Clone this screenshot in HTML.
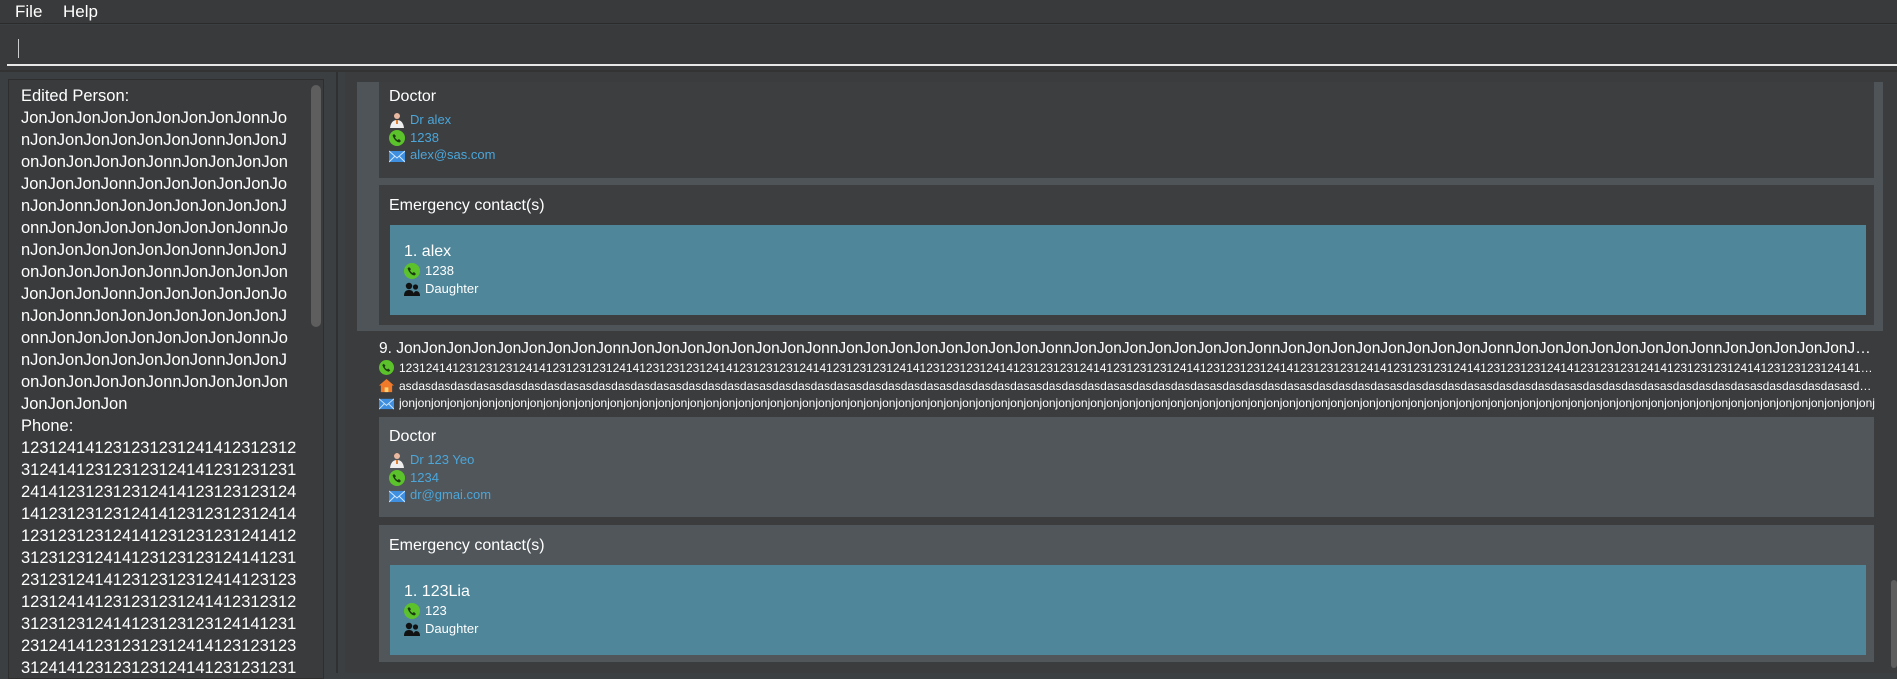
<!DOCTYPE html>
<html><head><meta charset="utf-8"><style>
*{margin:0;padding:0;box-sizing:border-box}
body{width:1897px;height:673px;overflow:hidden;background:#3c3f41;font-family:"Liberation Sans",sans-serif;color:#fff;position:relative}
.a{position:absolute}
.menu{left:0;top:0;width:1897px;height:24px;background:#393a3b;border-bottom:1px solid #2b2b2b}
.menu span{position:absolute;top:2px;font-size:17px;color:#fff}
.cmd{left:0;top:25px;width:1897px;height:47px;background:#393a3b}
.lt{left:21px;font-size:16.5px;line-height:22px;white-space:pre;color:#fff}
.sm{font-size:13px;white-space:nowrap}
.lnk{color:#4ba6da}
.ic{position:absolute;width:16px;height:16px}
.ell{white-space:nowrap;overflow:hidden;text-overflow:ellipsis}
</style></head><body>
<div class="a menu"><span style="left:15px">File</span><span style="left:63px">Help</span></div>
<div class="a cmd"></div>
<div class="a" style="left:18px;top:39px;width:1px;height:19px;background:#ccc"></div>
<div class="a" style="left:7px;top:64px;width:1890px;height:2px;background:#e8e8e8"></div>
<div class="a" style="left:0;top:70px;width:1897px;height:2px;background:#333"></div>

<!-- left panel -->
<div class="a" style="left:0;top:72px;width:336px;height:601px;background:#3c3f41"></div>
<div class="a" style="left:8px;top:79px;width:316px;height:600px;background:#3a3b3c;border:1px solid #2e2e2e"></div>
<div class="a" style="left:311px;top:85px;width:10px;height:242px;background:#5e5e5e;border-radius:5px"></div>
<div class="a lt" style="top:85px">Edited Person:
JonJonJonJonJonJonJonJonJonnJo
nJonJonJonJonJonJonJonnJonJonJ
onJonJonJonJonJonnJonJonJonJon
JonJonJonJonnJonJonJonJonJonJo
nJonJonnJonJonJonJonJonJonJonJ
onnJonJonJonJonJonJonJonJonnJo
nJonJonJonJonJonJonJonnJonJonJ
onJonJonJonJonJonnJonJonJonJon
JonJonJonJonnJonJonJonJonJonJo
nJonJonnJonJonJonJonJonJonJonJ
onnJonJonJonJonJonJonJonJonnJo
nJonJonJonJonJonJonJonnJonJonJ
onJonJonJonJonJonnJonJonJonJon
JonJonJonJon
Phone:
123124141231231231241412312312
312414123123123124141231231231
241412312312312414123123123124
141231231231241412312312312414
123123123124141231231231241412
312312312414123123123124141231
231231241412312312312414123123
123124141231231231241412312312
312312312414123123123124141231
231241412312312312414123123123
312414123123123124141231231231</div>

<!-- divider -->
<div class="a" style="left:336px;top:72px;width:2px;height:601px;background:#2f3031"></div>
<div class="a" style="left:338px;top:72px;width:7px;height:601px;background:#3c3f41"></div>
<div class="a" style="left:345px;top:72px;width:1552px;height:601px;background:#3a3c3e"></div>

<!-- card 1 -->
<div class="a" style="left:357px;top:82px;width:1526px;height:249px;background:#4e5457"></div>
<div class="a" style="left:379px;top:82px;width:1495px;height:96px;background:#3c3e40"></div>
<div class="a" style="left:389px;top:88px;font-size:16px">Doctor</div>
<svg class="ic" style="left:389px;top:112px" viewBox="0 0 16 16"><circle cx="8" cy="4" r="3" fill="#e8b8a0"/><path d="M5 3 Q8 -1 11 3 L11 2 Q8 0 5 2Z" fill="#6b4a3a"/><path d="M1 16 Q2 8 8 8 Q14 8 15 16Z" fill="#eee"/><rect x="7" y="8" width="2" height="4" fill="#e08030"/></svg>
<div class="a sm lnk" style="left:410px;top:112px">Dr alex</div>
<svg class="ic" style="left:389px;top:130px" viewBox="0 0 16 16"><circle cx="8" cy="8" r="8" fill="#5cc22b"/><path d="M5 4 L7 6 L6 7.5 Q7 9.5 8.5 10 L10 9 L12 11 L10.5 12.5 Q6 12 3.5 5.5Z" fill="#1b3a10"/></svg>
<div class="a sm lnk" style="left:410px;top:130px">1238</div>
<svg class="ic" style="left:389px;top:148px" viewBox="0 0 16 16"><rect x="0" y="3" width="16" height="11" fill="#3f8fe0"/><path d="M0 3 L8 10 L16 3 M0 14 L6 8 M16 14 L10 8" stroke="#cfe6ff" fill="none"/></svg>
<div class="a sm lnk" style="left:410px;top:147px">alex@sas.com</div>

<div class="a" style="left:379px;top:185px;width:1495px;height:140px;background:#3c3e40"></div>
<div class="a" style="left:389px;top:197px;font-size:16px">Emergency contact(s)</div>
<div class="a" style="left:390px;top:225px;width:1476px;height:90px;background:#4f8699"></div>
<div class="a" style="left:404px;top:243px;font-size:16px">1. alex</div>
<svg class="ic" style="left:404px;top:263px" viewBox="0 0 16 16"><circle cx="8" cy="8" r="8" fill="#5cc22b"/><path d="M5 4 L7 6 L6 7.5 Q7 9.5 8.5 10 L10 9 L12 11 L10.5 12.5 Q6 12 3.5 5.5Z" fill="#1b3a10"/></svg>
<div class="a sm" style="left:425px;top:263px">1238</div>
<svg class="ic" style="left:404px;top:281px" viewBox="0 0 16 16"><circle cx="5" cy="5" r="3.2" fill="#111"/><circle cx="11.5" cy="6" r="2.6" fill="#111"/><path d="M0 15 Q0 9 5 9 Q10 9 10 15Z M9 15 Q10 10 12 10 Q16 10 16 15Z" fill="#111"/></svg>
<div class="a sm" style="left:425px;top:281px">Daughter</div>

<!-- card 2 -->
<div class="a ell" style="left:379px;top:340px;width:1500px;font-size:15.5px">9. JonJonJonJonJonJonJonJonJonnJonJonJonJonJonJonJonJonnJonJonJonJonJonJonJonJonJonnJonJonJonJonJonJonJonJonnJonJonJonJonJonJonJonJonJonnJonJonJonJonJonJonJonJonnJonJonJonJonJonJonJonJonJonnJonJonJonJonJonJonJonJonnJonJonJonJonJonJonJonJonJonnJon</div>
<svg class="ic" style="left:379px;top:360px;width:15px;height:15px" viewBox="0 0 16 16"><circle cx="8" cy="8" r="8" fill="#5cc22b"/><path d="M5 4 L7 6 L6 7.5 Q7 9.5 8.5 10 L10 9 L12 11 L10.5 12.5 Q6 12 3.5 5.5Z" fill="#1b3a10"/></svg>
<div class="a ell" style="left:399px;top:361px;width:1478px;font-size:12px">1231241412312312312414123123123124141231231231241412312312312414123123123124141231231231241412312312312414123123123124141231231231241412312312312414123123123124141231231231241412312312312414123123123124141231231231241412312312312414123123123124141231231231241412312312312414123123123</div>
<svg class="ic" style="left:379px;top:378px;width:15px;height:15px" viewBox="0 0 16 16"><path d="M8 1 L16 8 L14 8 L14 15 L2 15 L2 8 L0 8Z" fill="#f07a2a"/><rect x="6" y="10" width="4" height="5" fill="#fbd070"/></svg>
<div class="a ell" style="left:399px;top:379px;width:1478px;font-size:12px">asdasdasdasdasasdasdasdasdasasdasdasdasdasasdasdasdasdasasdasdasdasdasasdasdasdasdasasdasdasdasdasasdasdasdasdasasdasdasdasdasasdasdasdasdasasdasdasdasdasasdasdasdasdasasdasdasdasdasasdasdasdasdasasdasdasdasdasasdasdasdasdasasdasdasdasdasasdasdasdasdasasdasdasdasdasasdasdasdasdasasdasdasdasda</div>
<svg class="ic" style="left:379px;top:396px;width:15px;height:15px" viewBox="0 0 16 16"><rect x="0" y="3" width="16" height="11" fill="#3f8fe0"/><path d="M0 3 L8 10 L16 3 M0 14 L6 8 M16 14 L10 8" stroke="#cfe6ff" fill="none"/></svg>
<div class="a ell" style="left:399px;top:396px;width:1478px;font-size:12px">jonjonjonjonjonjonjonjonjonjonjonjonjonjonjonjonjonjonjonjonjonjonjonjonjonjonjonjonjonjonjonjonjonjonjonjonjonjonjonjonjonjonjonjonjonjonjonjonjonjonjonjonjonjonjonjonjonjonjonjonjonjonjonjonjonjonjonjonjonjonjonjonjonjonjonjonjonjonjonjonjonjonjonjonjonjonjonjonjonjonjonjonj</div>

<div class="a" style="left:379px;top:417px;width:1495px;height:100px;background:#50565a"></div>
<div class="a" style="left:389px;top:428px;font-size:16px">Doctor</div>
<svg class="ic" style="left:389px;top:452px" viewBox="0 0 16 16"><circle cx="8" cy="4" r="3" fill="#e8b8a0"/><path d="M5 3 Q8 -1 11 3 L11 2 Q8 0 5 2Z" fill="#6b4a3a"/><path d="M1 16 Q2 8 8 8 Q14 8 15 16Z" fill="#eee"/><rect x="7" y="8" width="2" height="4" fill="#e08030"/></svg>
<div class="a sm lnk" style="left:410px;top:452px">Dr 123 Yeo</div>
<svg class="ic" style="left:389px;top:470px" viewBox="0 0 16 16"><circle cx="8" cy="8" r="8" fill="#5cc22b"/><path d="M5 4 L7 6 L6 7.5 Q7 9.5 8.5 10 L10 9 L12 11 L10.5 12.5 Q6 12 3.5 5.5Z" fill="#1b3a10"/></svg>
<div class="a sm lnk" style="left:410px;top:470px">1234</div>
<svg class="ic" style="left:389px;top:488px" viewBox="0 0 16 16"><rect x="0" y="3" width="16" height="11" fill="#3f8fe0"/><path d="M0 3 L8 10 L16 3 M0 14 L6 8 M16 14 L10 8" stroke="#cfe6ff" fill="none"/></svg>
<div class="a sm lnk" style="left:410px;top:487px">dr@gmai.com</div>

<div class="a" style="left:379px;top:525px;width:1495px;height:137px;background:#50565a"></div>
<div class="a" style="left:389px;top:537px;font-size:16px">Emergency contact(s)</div>
<div class="a" style="left:390px;top:565px;width:1476px;height:90px;background:#4f8699"></div>
<div class="a" style="left:404px;top:583px;font-size:16px">1. 123Lia</div>
<svg class="ic" style="left:404px;top:603px" viewBox="0 0 16 16"><circle cx="8" cy="8" r="8" fill="#5cc22b"/><path d="M5 4 L7 6 L6 7.5 Q7 9.5 8.5 10 L10 9 L12 11 L10.5 12.5 Q6 12 3.5 5.5Z" fill="#1b3a10"/></svg>
<div class="a sm" style="left:425px;top:603px">123</div>
<svg class="ic" style="left:404px;top:621px" viewBox="0 0 16 16"><circle cx="5" cy="5" r="3.2" fill="#111"/><circle cx="11.5" cy="6" r="2.6" fill="#111"/><path d="M0 15 Q0 9 5 9 Q10 9 10 15Z M9 15 Q10 10 12 10 Q16 10 16 15Z" fill="#111"/></svg>
<div class="a sm" style="left:425px;top:621px">Daughter</div>

<div class="a" style="left:1891px;top:580px;width:6px;height:88px;background:#5e5e5e;border-radius:3px"></div>
</body></html>
